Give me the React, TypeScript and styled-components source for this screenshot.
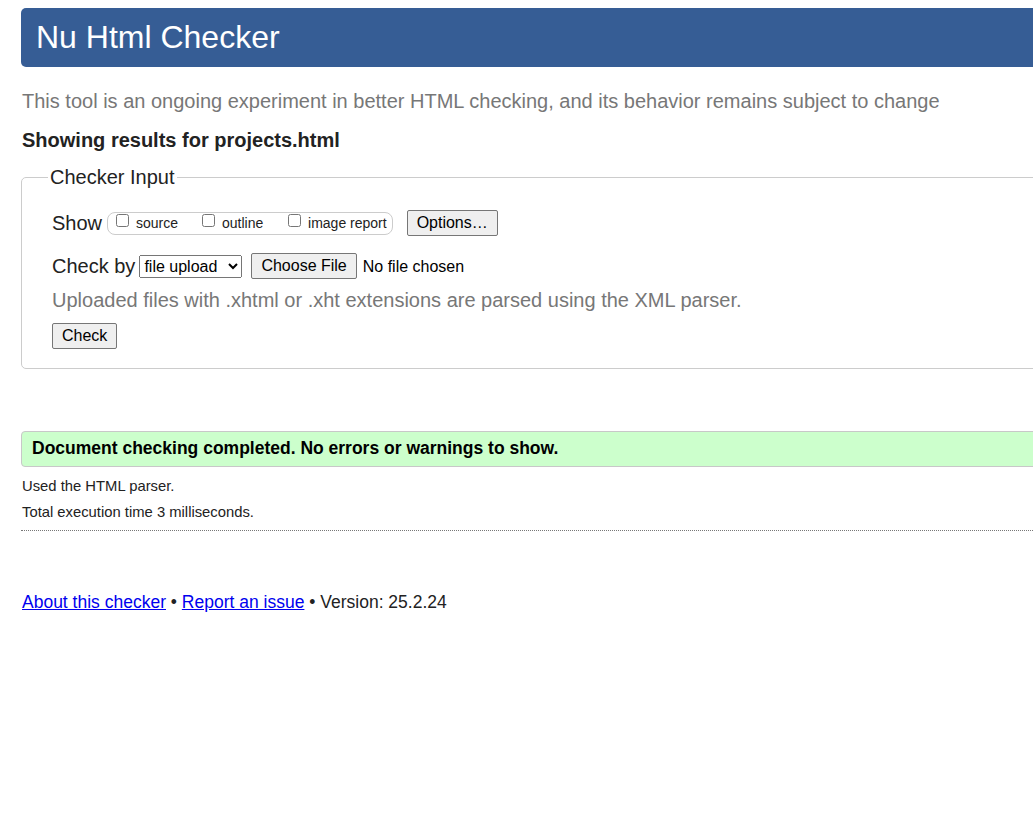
import styled, { createGlobalStyle } from 'styled-components'

const Global = createGlobalStyle`
  html, body {
    margin: 0;
    overflow: hidden;
    background: #fff;
  }
  body {
    font-family: "Liberation Sans", Arial, sans-serif;
    color: #222;
  }
`

const Page = styled.div`
  width: 1100px;
  padding: 8px 0 0 21px;
`

const Banner = styled.h1`
  margin: 0;
  padding: 11px 15px;
  background: #365d95;
  color: #fff;
  border-radius: 5px;
  font-size: 32px;
  font-weight: 400;
  line-height: 37px;
`

const Intro = styled.p`
  margin: 23px 0 0 1px;
  font-size: 20px;
  line-height: 23px;
  color: #777;
`

const Heading = styled.h2`
  margin: 16px 0 0 1px;
  font-size: 20px;
  line-height: 23px;
  font-weight: 700;
  color: #222;
`

const Fieldset = styled.fieldset`
  margin: 14px 0 0;
  padding: 21px 30px 19px;
  border: 1px solid #ccc;
  border-radius: 5px;
  min-width: 0;
`

const Legend = styled.legend`
  margin-left: -4px;
  padding: 0 2px;
  font-size: 20px;
  line-height: 23px;
`

const Row = styled.div<{ $gap?: number }>`
  display: flex;
  align-items: center;
  margin-top: ${(p) => p.$gap ?? 0}px;
  font-size: 20px;
  line-height: 23px;
`

const Group = styled.div`
  display: flex;
  align-items: center;
  height: 23px;
  box-sizing: border-box;
  margin-left: 5px;
  padding: 0 5px 0 0;
  border: 1px solid #ccc;
  border-radius: 8px;
`

const Option = styled.label<{ $w?: number }>`
  display: flex;
  align-items: center;
  width: ${(p) => (p.$w ? `${p.$w}px` : 'auto')};
  font-size: 14px;
  line-height: 16px;
  color: #222;

  input {
    width: 13px;
    height: 13px;
    margin: 0 7px 5px 8px;
  }
`

const Button = styled.button<{ $ml?: number }>`
  margin-left: ${(p) => p.$ml ?? 0}px;
  height: 26px;
  padding: 0 9px;
  font-family: "Liberation Sans", Arial, sans-serif;
  font-size: 16px;
  line-height: 18px;
  color: #000;
  background: #efefef;
  border: 1px solid #767676;
  border-radius: 2px;
`

const Select = styled.select`
  margin-left: 4px;
  width: 103px;
  height: 23px;
  font-family: "Liberation Sans", Arial, sans-serif;
  font-size: 16px;
  color: #000;
`

const Plain = styled.span`
  margin-left: 6px;
  font-size: 16px;
  color: #000;
`

const Note = styled.p`
  margin: 10px 0 0;
  font-size: 20px;
  line-height: 23px;
  color: #777;
`

const Success = styled.div`
  margin-top: 62px;
  padding: 6px 10px 8px;
  background: #ccffcc;
  border: 1px solid #c8c8c8;
  border-radius: 4px;
  font-size: 17.5px;
  line-height: 20px;
  font-weight: 700;
  color: #000;
`

const Detail = styled.p<{ $mt: number }>`
  margin: ${(p) => p.$mt}px 0 0 1px;
  font-size: 14.8px;
  line-height: 17px;
  color: #222;
`

const Rule = styled.hr`
  margin: 9px 0 0;
  border: 0;
  border-top: 1px dotted #777;
`

const Footer = styled.p`
  margin: 61px 0 0 1px;
  font-size: 17.5px;
  line-height: 20px;
  color: #222;

  a {
    color: #0000ee;
  }
`

export default function App() {
  return (
    <Page>
      <Global />
      <Banner>Nu Html Checker</Banner>
      <Intro>
        This tool is an ongoing experiment in better HTML checking, and its
        behavior remains subject to change
      </Intro>
      <Heading>Showing results for projects.html</Heading>

      <Fieldset>
        <Legend>Checker Input</Legend>
        <Row>
          Show
          <Group>
            <Option $w={86}>
              <input type="checkbox" />
              source
            </Option>
            <Option $w={86}>
              <input type="checkbox" />
              outline
            </Option>
            <Option>
              <input type="checkbox" />
              image report
            </Option>
          </Group>
          <Button $ml={14}>Options…</Button>
        </Row>
        <Row $gap={17}>
          Check by
          <Select defaultValue="file">
            <option value="url">address</option>
            <option value="file">file upload</option>
            <option value="text">text input</option>
          </Select>
          <Button $ml={9}>Choose File</Button>
          <Plain>No file chosen</Plain>
        </Row>
        <Note>
          Uploaded files with .xhtml or .xht extensions are parsed using the
          XML parser.
        </Note>
        <Row $gap={11}>
          <Button>Check</Button>
        </Row>
      </Fieldset>

      <Success>Document checking completed. No errors or warnings to show.</Success>
      <Detail $mt={11}>Used the HTML parser.</Detail>
      <Detail $mt={9}>Total execution time 3 milliseconds.</Detail>
      <Rule />

      <Footer>
        <a href="#about">About this checker</a> •{' '}
        <a href="#issue">Report an issue</a> • Version: 25.2.24
      </Footer>
    </Page>
  )
}
